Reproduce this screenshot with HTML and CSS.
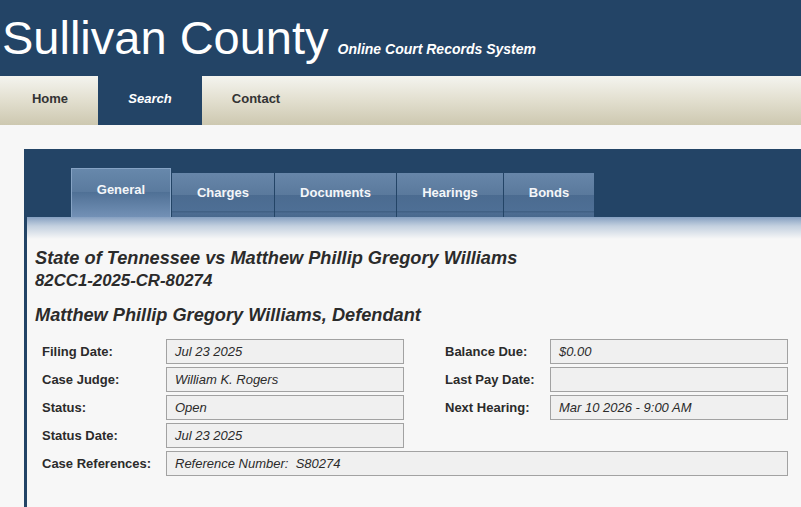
FILE: index.html
```html
<!DOCTYPE html>
<html lang="en">
<head>
  <meta charset="UTF-8" />
  <meta name="viewport" content="width=device-width, initial-scale=1.0" />
  <title>Sullivan County - Online Court Records System</title>
  <link rel="stylesheet" href="styles.css">
</head>
<body>
  <div class="header">
    <h1 class="site-title">Sullivan County</h1>
    <span class="site-sub">Online Court Records System</span>
  </div>

  <div class="nav">
    <a href="#" class="nav-item nav-home">Home</a>
    <a href="#" class="nav-item nav-search active">Search</a>
    <a href="#" class="nav-item nav-contact">Contact</a>
  </div>

  <div class="panel">
    <div class="tabs">
      <a href="#" class="tab tab-general active">General</a>
      <a href="#" class="tab tab-charges">Charges</a>
      <a href="#" class="tab tab-documents">Documents</a>
      <a href="#" class="tab tab-hearings">Hearings</a>
      <a href="#" class="tab tab-bonds">Bonds</a>
    </div>

    <div class="case">
      <h2 class="case-title">State of Tennessee vs Matthew Phillip Gregory Williams</h2>
      <div class="case-number">82CC1-2025-CR-80274</div>
      <h3 class="party">Matthew Phillip Gregory Williams, Defendant</h3>

      <div class="fields">
        <div class="label">Filing Date:</div>
        <div class="value">Jul 23 2025</div>
        <div class="spacer"></div>
        <div class="label">Balance Due:</div>
        <div class="value">$0.00</div>

        <div class="label">Case Judge:</div>
        <div class="value">William K. Rogers</div>
        <div class="spacer"></div>
        <div class="label">Last Pay Date:</div>
        <div class="value"></div>

        <div class="label">Status:</div>
        <div class="value">Open</div>
        <div class="spacer"></div>
        <div class="label">Next Hearing:</div>
        <div class="value">Mar 10 2026 - 9:00 AM</div>

        <div class="label">Status Date:</div>
        <div class="value">Jul 23 2025</div>
        <div class="spacer"></div>
        <div class="label"></div>
        <div class="blank"></div>

        <div class="label">Case References:</div>
        <div class="value wide">Reference Number:&nbsp; S80274</div>
      </div>
    </div>
  </div>
</body>
</html>
```

FILE: styles.css
```css
body {
  margin: 0;
  background: #f7f7f7;
  font-family: "Liberation Sans", Arial, sans-serif;
  color: #2b2b2b;
}

/* header */
.header {
  background: #234466;
  height: 76px;
  box-sizing: border-box;
  padding: 14px 0 0 2px;
  display: flex;
  align-items: baseline;
  gap: 9px;
  color: white;
}
.site-title {
  margin: 0;
  font-size: 47px;
  font-weight: normal;
  line-height: 48px;
}
.site-sub {
  font-size: 14px;
  font-weight: bold;
  font-style: italic;
}

/* top nav */
.nav {
  display: flex;
  height: 49px;
  background: linear-gradient(#f4f4ef, #e4e1d2 45%, #cdc8b0);
}
.nav-item {
  display: block;
  height: 49px;
  box-sizing: border-box;
  padding-bottom: 4px;
  line-height: 45px;
  text-align: center;
  font-size: 13px;
  font-weight: bold;
  color: #333;
  text-decoration: none;
}
.nav-home { width: 98px; padding-left: 2px; }
.nav-search { width: 104px; }
.nav-contact { width: 108px; }
.nav-item.active {
  background: #234466;
  color: white;
  font-style: italic;
}

/* case panel */
.panel {
  margin: 24px 0 0 24px;
  border-left: 3px solid #234466;
  min-height: 360px;
}
.tabs {
  background: #234466;
  height: 68px;
  padding-left: 44px;
  display: flex;
  align-items: flex-end;
  gap: 1px;
}
.tab {
  display: block;
  height: 44px;
  box-sizing: border-box;
  padding-top: 12px;
  line-height: 16px;
  text-align: center;
  font-size: 13px;
  font-weight: bold;
  color: #f4f6f9;
  text-decoration: none;
  background: linear-gradient(#6786a9, #5a799c 50%, #4b6b90 50%, #4e6f95 86%, #3d5c80 88%, #4d6d93 91%, #48688d);
}
.tab.active {
  height: 49px;
  padding-top: 13px;
  border: 1px solid #86a3c4;
  border-bottom: none;
  background: linear-gradient(#6788ab, #5a7a9e 48%, #4f7095 48%, #7391b6);
}
.tab-general { width: 100px; }
.tab-charges { width: 102px; }
.tab-documents { width: 121px; }
.tab-hearings { width: 106px; }
.tab-bonds { width: 90px; }

.case {
  padding: 30px 0 30px 8px;
  background: linear-gradient(#86a0c1, #c3d0df 9px, #f7f7f7 22px) no-repeat;
  background-size: 100% 24px;
}
.case-title {
  margin: 0;
  font-size: 18.2px;
  font-style: italic;
  line-height: 23px;
}
.case-number {
  font-size: 16.8px;
  font-weight: bold;
  font-style: italic;
  line-height: 22px;
}
.party {
  margin: 12px 0 0;
  font-size: 18.2px;
  font-style: italic;
  line-height: 22px;
}

/* detail fields */
.fields {
  margin: 13px 0 0 7px;
  display: grid;
  grid-template-columns: 124px 238px 41px 105px 238px;
  grid-auto-rows: 25px;
  row-gap: 3px;
  font-size: 13px;
}
.label {
  font-weight: bold;
  line-height: 25px;
}
.value {
  border: 1px solid #a2a2a2;
  background: #f0f0f0;
  padding-left: 8px;
  line-height: 23px;
  font-style: italic;
}
.value.wide {
  grid-column: 2 / 6;
}
```
